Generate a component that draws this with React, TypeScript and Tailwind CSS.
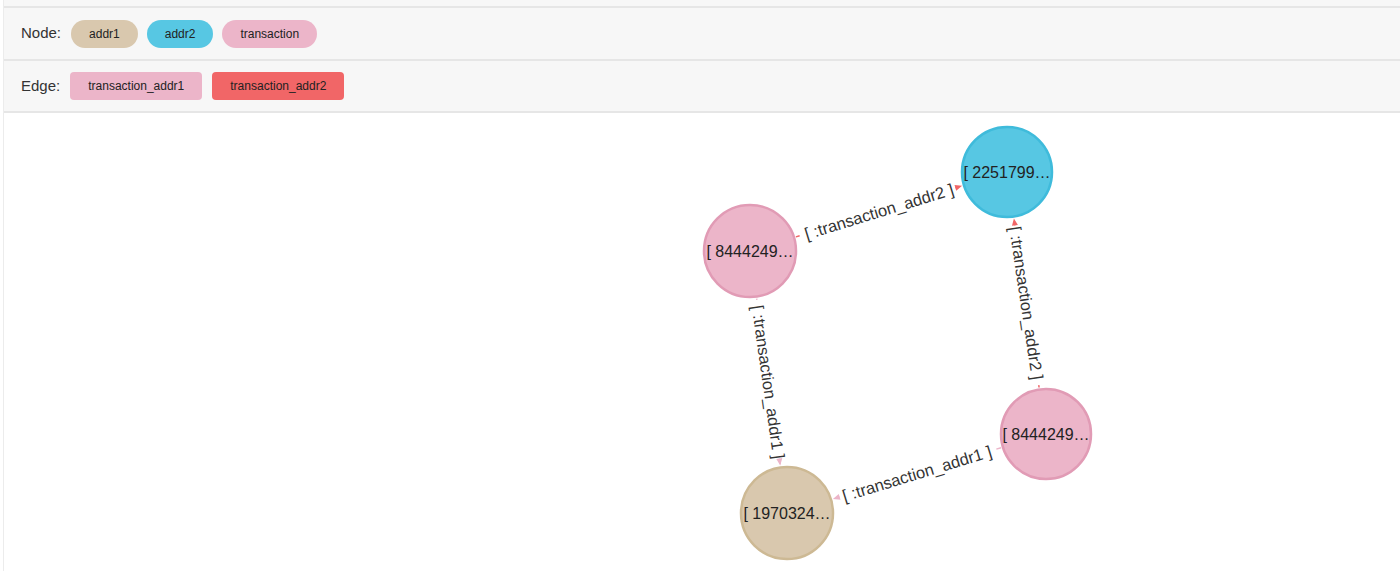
const nodeChips = [
  { label: 'addr1', cls: 'bg-[#D9C8AE]' },
  { label: 'addr2', cls: 'bg-[#57C7E3]' },
  { label: 'transaction', cls: 'bg-[#ECB5C9]' },
]

const edgeChips = [
  { label: 'transaction_addr1', cls: 'bg-[#ECB5C9]' },
  { label: 'transaction_addr2', cls: 'bg-[#F16667]' },
]

type GNode = { id: string; x: number; y: number; r: number; fill: string; stroke: string; text: string }

const nodes: GNode[] = [
  { id: 'a', x: 750, y: 251, r: 46, fill: '#ECB5C9', stroke: '#E19BB5', text: '[ 8444249…' },
  { id: 'b', x: 1007, y: 172, r: 45, fill: '#57C7E3', stroke: '#3FBBDB', text: '[ 2251799…' },
  { id: 'c', x: 1046, y: 434, r: 45, fill: '#ECB5C9', stroke: '#E19BB5', text: '[ 8444249…' },
  { id: 'd', x: 787, y: 513, r: 46, fill: '#D9C8AE', stroke: '#CDB994', text: '[ 1970324…' },
]

const edges = [
  { from: 'a', to: 'b', label: '[ :transaction_addr2 ]', color: '#F16667' },
  { from: 'c', to: 'b', label: '[ :transaction_addr2 ]', color: '#F16667' },
  { from: 'a', to: 'd', label: '[ :transaction_addr1 ]', color: '#ECB5C9' },
  { from: 'c', to: 'd', label: '[ :transaction_addr1 ]', color: '#ECB5C9' },
]

const byId = (id: string) => nodes.find((n) => n.id === id)!

function Edge({ e }: { e: (typeof edges)[number] }) {
  const a = byId(e.from)
  const b = byId(e.to)
  const dx = b.x - a.x
  const dy = b.y - a.y
  const len = Math.hypot(dx, dy)
  const ux = dx / len
  const uy = dy / len
  const sx = a.x + ux * (a.r + 2)
  const sy = a.y + uy * (a.r + 2)
  const ex = b.x - ux * (b.r + 2)
  const ey = b.y - uy * (b.r + 2)
  const mx = (sx + ex) / 2
  const my = (sy + ey) / 2
  const half = 83
  const arrow = 7
  let angle = (Math.atan2(dy, dx) * 180) / Math.PI
  if (angle > 90) angle -= 180
  if (angle < -90) angle += 180
  const l1x = mx - ux * half
  const l1y = my - uy * half
  const l2x = mx + ux * half
  const l2y = my + uy * half
  const abx = ex - ux * arrow
  const aby = ey - uy * arrow
  const px = -uy * 3
  const py = ux * 3
  return (
    <g>
      <line x1={sx} y1={sy} x2={l1x} y2={l1y} stroke={e.color} strokeWidth={1.5} />
      <line x1={l2x} y1={l2y} x2={abx} y2={aby} stroke={e.color} strokeWidth={1.5} />
      <polygon points={`${ex},${ey} ${abx + px},${aby + py} ${abx - px},${aby - py}`} fill={e.color} />
      <text
        x={mx}
        y={my}
        transform={`rotate(${angle} ${mx} ${my})`}
        textAnchor="middle"
        dominantBaseline="central"
        fontSize={16.5}
        fill="#333"
        style={{ fontFamily: '"Liberation Sans", Arial, sans-serif' }}
      >
        {e.label}
      </text>
    </g>
  )
}

export default function App() {
  return (
    <div className="w-[1400px] h-[571px] overflow-hidden bg-white pl-[3px]" style={{ fontFamily: '"Liberation Sans", Arial, sans-serif' }}>
      <div className="h-full border-l border-[#ececec] flex flex-col">
        <div className="h-[8px] bg-[#f7f7f7] border-b-2 border-[#e6e6e6] shrink-0" />
        <div className="h-[53px] bg-[#f7f7f7] border-b-2 border-[#e6e6e6] flex items-center pl-[17px] shrink-0">
          <span className="text-[15px] text-[#333] mr-[10px]">Node:</span>
          <div className="flex gap-[9px]">
            {nodeChips.map((c) => (
              <span key={c.label} className={`h-[28px] px-[18px] rounded-full text-[12px] text-[#222] flex items-center ${c.cls}`}>{c.label}</span>
            ))}
          </div>
        </div>
        <div className="h-[52px] bg-[#f7f7f7] border-b-2 border-[#e6e6e6] flex items-center pl-[17px] shrink-0">
          <span className="text-[15px] text-[#333] mr-[10px]">Edge:</span>
          <div className="flex gap-[10px]">
            {edgeChips.map((c) => (
              <span key={c.label} className={`h-[28px] px-[18px] rounded-[4px] text-[12px] text-[#222] flex items-center ${c.cls}`}>{c.label}</span>
            ))}
          </div>
        </div>
        <div className="flex-1 relative">
          <svg width="1396" height="458" className="block">
            <g transform="translate(-4,-113)">
              {edges.map((e, i) => (
                <Edge key={i} e={e} />
              ))}
              {nodes.map((n) => (
                <g key={n.id}>
                  <circle cx={n.x} cy={n.y} r={n.r} fill={n.fill} stroke={n.stroke} strokeWidth={2.5} />
                  <text
                    x={n.x}
                    y={n.y}
                    textAnchor="middle"
                    dominantBaseline="central"
                    fontSize={16}
                    fill="#222"
                    style={{ fontFamily: '"Liberation Sans", Arial, sans-serif' }}
                  >
                    {n.text}
                  </text>
                </g>
              ))}
            </g>
          </svg>
        </div>
      </div>
    </div>
  )
}
